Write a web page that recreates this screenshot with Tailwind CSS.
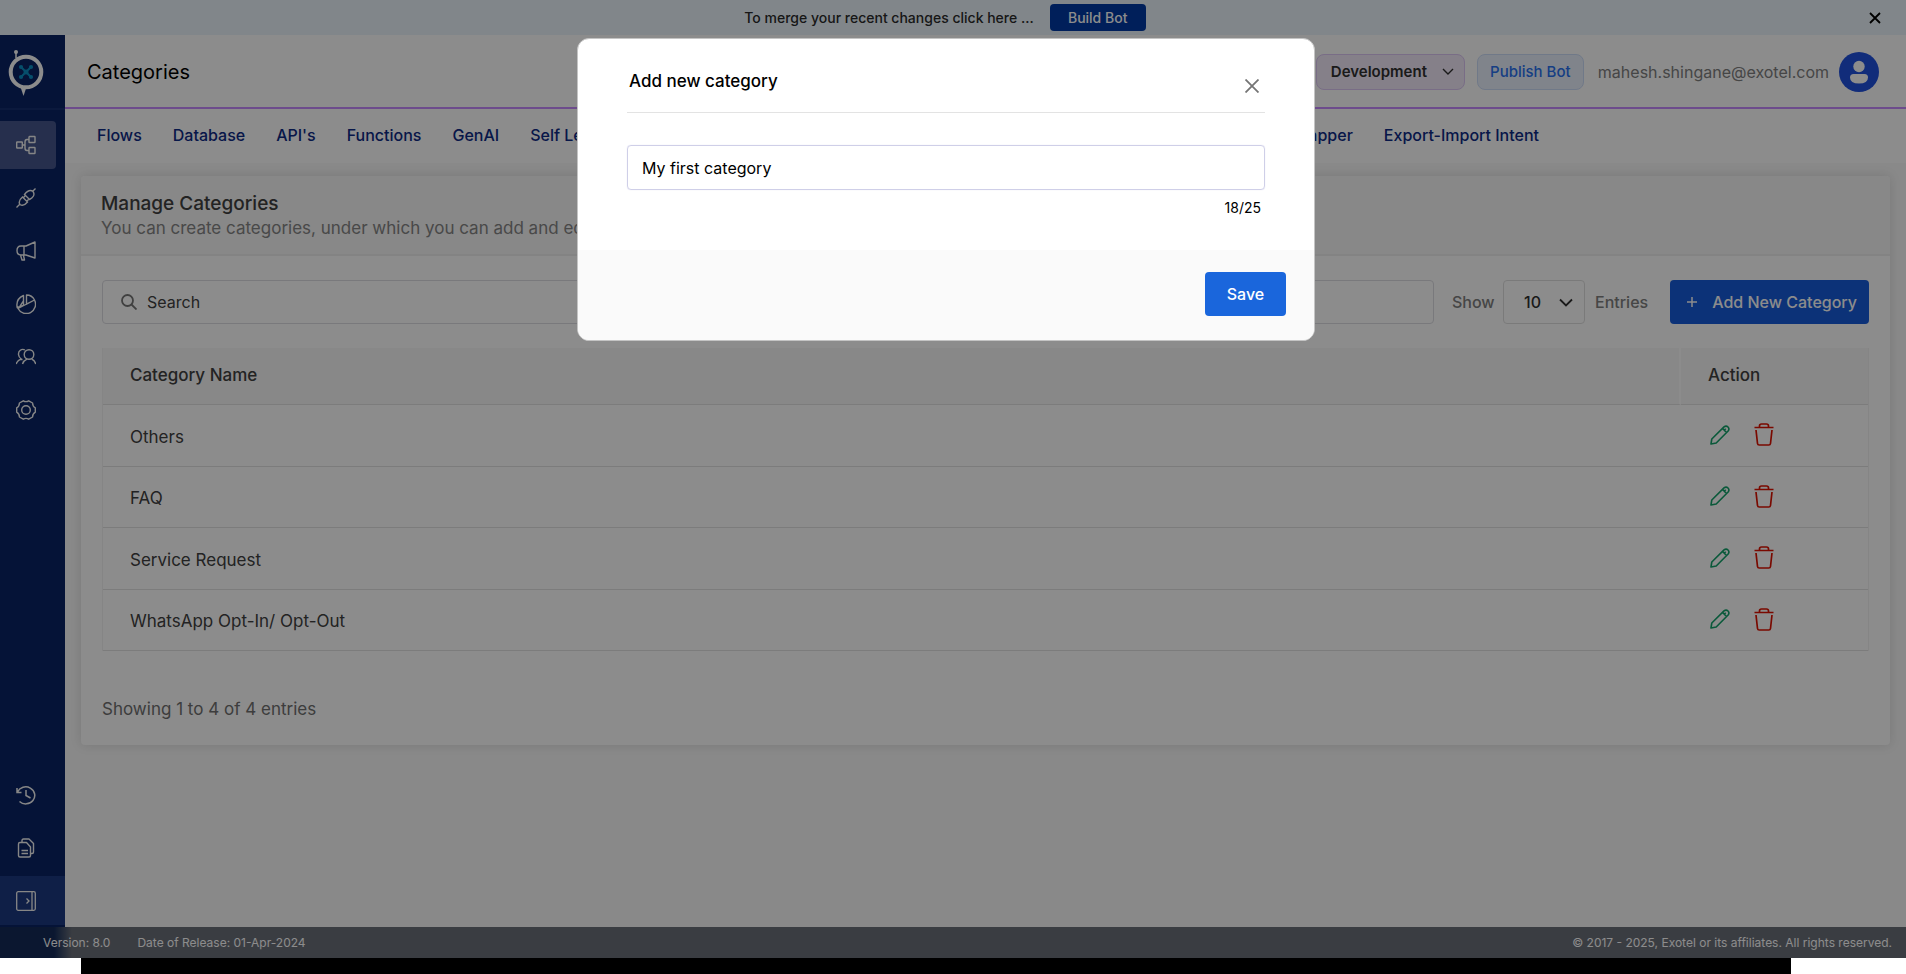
<!DOCTYPE html>
<html lang="en">
<head>
<meta charset="utf-8">
<meta name="viewport" content="width=device-width, initial-scale=1">
<title>Categories</title>
<script src="https://cdn.jsdelivr.net/npm/@tailwindcss/browser@4"></script>
</head>
<body class="flex min-h-screen flex-col bg-white font-['Inter',sans-serif] text-base text-[#404040]">
<svg class="hidden" aria-hidden="true">
  <symbol id="pencil" viewBox="0 0 20 20" fill="none" stroke="currentColor" stroke-width="1.600" stroke-linejoin="round"><path d="M1 19l.8-5L14 1.900q2.200-1.700 4 .1t.1 4L6.200 18zM12.600 3.500l3.900 4M14.200 5.200l1.500-1.500"/></symbol>
  <symbol id="trash" viewBox="0 0 20 23" fill="none" stroke="currentColor" stroke-width="1.700" stroke-linejoin="round"><path d="M.5 4.500h19M5.500 4.500V3q0-2 2-2h5q2 0 2 2v1.500M2 7l1.500 13.500q.2 1.500 1.700 1.500h9.600q1.500 0 1.700-1.500L18 7"/></symbol>
</svg>

<div class="relative flex flex-1 flex-col">
  <div class="grid h-[35px] grid-cols-[1fr_auto_1fr] items-center bg-[#ebf5fb] px-6">
    <span></span>
    <div class="flex items-center gap-4 pr-4">
      <p class="text-sm font-medium text-[#2b2b2b]">To merge your recent changes click here ...</p>
      <button type="button" class="h-[27px] w-24 rounded bg-[#003aa5] text-sm font-medium text-white">Build Bot</button>
    </div>
    <button type="button" aria-label="Dismiss" class="justify-self-end text-black"><svg class="size-3.5" viewBox="0 0 14 14" fill="none" stroke="currentColor" stroke-width="1.800"><path d="M2 2l10 10M12 2L2 12"/></svg></button>
  </div>

  <div class="flex flex-1">
    <aside class="flex w-[65px] shrink-0 flex-col bg-[#0a2465]">
      <a href="#" aria-label="Home" class="flex h-[75px] items-center border-b-2 border-[#142f70] pt-1 pl-1.5">
        <svg class="h-[54px] w-10" viewBox="0 0 40 54"><path d="M10 11V5" stroke="#fff" stroke-width="1.500"/><circle cx="10" cy="5" r="2" fill="#fff"/><circle cx="20" cy="25" r="15.300" fill="none" stroke="#fff" stroke-width="4"/><path d="M14.500 40L17.500 49l3-9z" fill="#fff"/><path d="M15 20l10 10M25 20l-10 10" stroke="#0b8fc4" stroke-width="2"/><g fill="#0b8fc4"><circle cx="15" cy="20" r="2.100"/><circle cx="25" cy="20" r="2.100"/><circle cx="15" cy="30" r="2.100"/><circle cx="25" cy="30" r="2.100"/><circle cx="20" cy="25" r="2.500"/></g></svg>
      </a>
      <nav aria-label="Main" class="flex flex-1 flex-col pt-[11px] text-[#f5f5f5] [&_svg]:size-5 [&_svg]:fill-none [&_svg]:stroke-current">
        <a href="#" aria-label="Flows" class="mb-[5px] flex h-12 w-14 items-center rounded-r-sm bg-[#45578c] pl-4"><svg viewBox="0 0 20 20" stroke-width="1.400"><rect x=".7" y="7" width="5.600" height="6" rx=".5"/><rect x="13" y="1.500" width="6" height="6" rx=".5"/><rect x="13" y="12.500" width="6" height="6" rx=".5"/><path d="M6.300 10H9M13 4.500h-2Q9 4.500 9 7v6q0 2.500 2 2.500h2"/></svg></a>
        <a href="#" aria-label="Integrations" class="mb-[5px] flex h-12 items-center pl-4"><svg viewBox="0 0 20 20" stroke-width="1.400"><path d="M.5 19.500l3-3M4 16.500c-2-3-.5-5 2.500-7.500l5 5c-2.500 3-4.500 4.500-7.500 2.500zM8.500 6.500l5 5c3-1.500 6-4.500 3.500-8-3.500-2.500-6.500.5-8.500 3zM16.500 3.500l3-3M7 10l2-2M10.500 13.500l2-2"/></svg></a>
        <a href="#" aria-label="Campaigns" class="mb-[5px] flex h-12 items-center pl-4"><svg viewBox="0 0 20 20" stroke-width="1.400" stroke-linejoin="round"><path d="M19 1v16l-9-3H5q-4 0-4-4.500T5 5h5zM8 5v9M4.500 14l1.500 5h2.500l-1-4.500"/></svg></a>
        <a href="#" aria-label="Analytics" class="mb-[5px] flex h-12 items-center pl-4"><svg viewBox="0 0 20 20" stroke-width="1.400" stroke-linejoin="round"><path d="M10.500 1q5.500 0 8 5l-8 4.200zM18.500 6a9 9 0 1 1-16.500 8.500zM7.500 1.500v10L1.200 13.500Q-.5 5 7.500 1.500zM3.500 12.800l4-6"/></svg></a>
        <a href="#" aria-label="Users" class="mb-[5px] flex h-12 items-center pl-4"><svg viewBox="0 0 20 20" stroke-width="1.400"><circle cx="13" cy="7.500" r="4.800"/><path d="M6.500 17q1.200-3.500 4.500-4.800M19.800 17q-1-3.500-4-4.800M9 3C5.500 1.200 2.200 4 2.500 7.500q.3 3 2.800 4.500Q1.200 13.500.2 17M4.500 12.500h2"/></svg></a>
        <a href="#" aria-label="Settings" class="flex h-12 items-center pl-4"><svg viewBox="0 0 20 20" stroke-width="1.400" stroke-linejoin="round"><circle cx="10" cy="10" r="4.300"/><path d="M19.300 7.800v4.400Q16.500 13.800 16.600 17L12.700 19.200Q10 17.600 7.300 19.200L3.400 17Q3.500 13.800.7 12.200V7.800Q3.500 6.200 3.400 3L7.300.8Q10 2.400 12.700.8L16.600 3Q16.500 6.200 19.300 7.800z"/></svg></a>
        <a href="#" aria-label="History" class="mt-auto mb-[5px] flex h-12 items-center pl-4"><svg viewBox="0 0 20 20" stroke-width="1.500"><path d="M1 3v4.500h4.500M1.500 7a9 8.500 0 1 1 2 9.500M10 5v5.500l4.500 2.500"/></svg></a>
        <a href="#" aria-label="Documents" class="mb-1 flex h-12 items-center pl-4"><svg viewBox="0 0 20 20" stroke-width="1.400" stroke-linejoin="round"><path d="M4 4.500h6.500l4 4.500v8.500q0 1.500-1.500 1.500H4q-1.500 0-1.500-1.500V6q0-1.500 1.500-1.500zM6 4V2.500Q6 1 7.500 1H13l4.500 4.500V14q0 1.500-1.500 1.500h-1M5.500 12.500H12M5.500 15.500H12"/></svg></a>
        <a href="#" aria-label="Expand sidebar" class="mb-0.5 flex h-[49px] items-center bg-[#1d3a81] pl-4"><svg viewBox="0 0 20 20" stroke-width="1.300"><rect x=".7" y=".7" width="18.600" height="18.600" rx="1.500"/><path d="M16 .7v18.600M10.500 7.500L13 10l-2.500 2.500"/></svg></a>
      </nav>
    </aside>

    <div class="flex min-w-0 flex-1 flex-col bg-[#f9f9f9]">
      <header class="flex h-[74px] items-center border-b-2 border-[#c68aff] bg-white pt-0.5 pr-[27px] pl-[22px]">
        <h1 class="flex-1 text-xl text-black">Categories</h1>
        <button type="button" class="mr-3 flex h-9 w-[149px] items-center justify-between rounded-lg border border-[#dcc6f4] bg-[#f2eafa] pr-2.5 pl-3.5 text-[15px] font-semibold text-[#303030]">Development<svg class="h-2 w-3" viewBox="0 0 12 8" fill="none" stroke="currentColor" stroke-width="1.400"><path d="M1 1l5 5 5-5"/></svg></button>
        <button type="button" class="mr-3.5 h-9 w-[107px] rounded-lg border border-[#cddcf8] bg-[#eaf1fd] text-[15px] font-medium text-[#2871f0]">Publish Bot</button>
        <span class="mr-2.5 text-[#808080]">mahesh.shingane@exotel.com</span>
        <a href="#" aria-label="Account"><svg class="size-10" viewBox="0 0 40 40"><circle cx="20" cy="20" r="20" fill="#1f50de"/><circle cx="20" cy="14.500" r="5.700" fill="#fff"/><path d="M11 25.500q0-3.500 3.500-3.500h11q3.500 0 3.500 3.500 0 6-9 6t-9-6z" fill="#fff"/></svg></a>
      </header>

      <nav aria-label="Bot sections" class="flex h-[54px] justify-between bg-white pt-3.5 pr-[367px] pl-8 font-medium text-[#0e2a85]">
        <div class="flex gap-[31px]"><a href="#">Flows</a><a href="#">Database</a><a href="#">API's</a><a href="#">Functions</a><a href="#">GenAI</a><a href="#">Self Learning</a></div>
        <div class="flex gap-[31px]"><a href="#">Mapper</a><a href="#">Export-Import Intent</a></div>
      </nav>

      <main class="pt-[13px] pr-4 pl-4">
        <section class="rounded bg-white shadow-[0_0_12px_rgba(0,0,0,0.12)]">
          <div class="h-20 rounded-t border-b-2 border-[#efefef] bg-[#f7f7f7] px-5 pt-4">
            <h2 class="text-[19px] leading-6 font-medium">Manage Categories</h2>
            <p class="text-[17px] leading-6 text-[#858585]">You can create categories, under which you can add and edit</p>
          </div>
          <div class="px-[21px] pt-6 pb-6">
            <div class="flex h-11 items-center">
              <label class="flex h-full flex-1 items-center gap-2.5 rounded border border-[#dcdce2] px-[18px]">
                <svg class="size-4 text-[#757575]" viewBox="0 0 16 16" fill="none" stroke="currentColor" stroke-width="1.800"><circle cx="6.500" cy="6.500" r="5.500"/><path d="M10.500 10.500l5 5"/></svg>
                <input type="search" aria-label="Search" placeholder="Search" class="min-w-0 flex-1 bg-transparent outline-none placeholder:text-[#404040]">
              </label>
              <label for="entries" class="ml-[18px] w-[51px] font-medium text-[#808080]">Show</label>
              <div class="relative h-full w-[82px]">
                <select id="entries" class="size-full appearance-none rounded border border-[#dedede] bg-white pl-5 font-medium text-[#303030]"><option>10</option><option>25</option></select>
                <svg class="pointer-events-none absolute top-[18px] right-3 h-2.5 w-3.5 text-[#303030]" viewBox="0 0 14 10" fill="none" stroke="currentColor" stroke-width="1.800"><path d="M1 1.500l6 6 6-6"/></svg>
              </div>
              <span class="ml-2.5 w-[75px] font-medium text-[#808080]">Entries</span>
              <button type="button" class="flex h-full w-[199px] items-center justify-between rounded bg-[#165bda] pr-3 pl-[17px] font-medium text-white"><svg class="size-2.5" viewBox="0 0 10 10" stroke="currentColor" stroke-width="1.500"><path d="M5 0v10M0 5h10"/></svg>Add New Category</button>
            </div>

            <table class="mt-6 w-full table-fixed border-separate border-spacing-0 border-x border-[#f3f3f3] text-left text-[17px]">
              <thead><tr class="h-[57px] bg-[#f7f7f7]">
                <th scope="col" class="border-r-2 border-b border-[#e2e2e2] border-r-white px-[27px] font-medium">Category Name</th>
                <th scope="col" class="w-[187px] border-b border-[#e2e2e2] px-[27px] font-medium">Action</th>
              </tr></thead>
              <tbody class="[&_td]:h-[61px] [&_td]:border-b [&_td]:border-[#e2e2e2] [&_td]:px-[27px] [&_td]:pt-1 [&_svg]:w-5 [&_tr:nth-child(odd)_td]:h-[62px]">
                <tr><td>Others</td><td><div class="flex items-center gap-6 pb-1.5 pl-0.5"><button type="button" aria-label="Edit Others" class="text-[#13a36b]"><svg class="h-5"><use href="#pencil"/></svg></button><button type="button" aria-label="Delete Others" class="text-[#de1200]"><svg class="h-[23px]"><use href="#trash"/></svg></button></div></td></tr>
                <tr><td>FAQ</td><td><div class="flex items-center gap-6 pb-1.5 pl-0.5"><button type="button" aria-label="Edit FAQ" class="text-[#13a36b]"><svg class="h-5"><use href="#pencil"/></svg></button><button type="button" aria-label="Delete FAQ" class="text-[#de1200]"><svg class="h-[23px]"><use href="#trash"/></svg></button></div></td></tr>
                <tr><td>Service Request</td><td><div class="flex items-center gap-6 pb-1.5 pl-0.5"><button type="button" aria-label="Edit Service Request" class="text-[#13a36b]"><svg class="h-5"><use href="#pencil"/></svg></button><button type="button" aria-label="Delete Service Request" class="text-[#de1200]"><svg class="h-[23px]"><use href="#trash"/></svg></button></div></td></tr>
                <tr><td>WhatsApp Opt-In/ Opt-Out</td><td><div class="flex items-center gap-6 pb-1.5 pl-0.5"><button type="button" aria-label="Edit WhatsApp Opt-In/ Opt-Out" class="text-[#13a36b]"><svg class="h-5"><use href="#pencil"/></svg></button><button type="button" aria-label="Delete WhatsApp Opt-In/ Opt-Out" class="text-[#de1200]"><svg class="h-[23px]"><use href="#trash"/></svg></button></div></td></tr>
              </tbody>
            </table>
            <p class="mt-[46px] text-[17px] leading-6 text-[#707070]">Showing 1 to 4 of 4 entries</p>
          </div>
        </section>
      </main>
    </div>
  </div>

  <footer class="flex h-[31px] items-center gap-[27px] bg-linear-to-r from-[#142b58] from-[54px] to-[#6b7079] to-[72px] pr-3.5 pl-[43px] text-xs text-white">
    <span>Version: 8.0</span>
    <span>Date of Release: 01-Apr-2024</span>
    <span class="ml-auto">© 2017 - 2025, Exotel or its affiliates. All rights reserved.</span>
  </footer>

  <div class="absolute inset-0 z-10 flex items-start justify-center bg-black/45 pt-[38px] pr-3.5">
    <div role="dialog" aria-modal="true" aria-labelledby="dialog-title" class="w-[738px] overflow-hidden rounded-xl border border-[#c4c4c4] bg-white text-black">
      <div class="px-[49px] pb-8">
        <div class="flex h-[74px] items-center justify-between border-b border-[#e3e3e3] pt-4 pr-1.5 pl-0.5">
          <h2 id="dialog-title" class="pb-1 text-[17px] font-medium">Add new category</h2>
          <button type="button" aria-label="Close" class="pt-1 text-[#757575]"><svg class="size-3.5" viewBox="0 0 14 14" fill="none" stroke="currentColor" stroke-width="1.800"><path d="M.5.5l13 13M13.500.5l-13 13"/></svg></button>
        </div>
        <input type="text" aria-label="Category name" value="My first category" class="mt-8 h-[45px] w-full rounded border border-[#cfcfe8] px-3.5 text-base shadow-[0_0_1px_#cfcfe8] outline-none">
        <p class="mt-2 pr-1 text-right text-sm">18/25</p>
      </div>
      <div class="flex h-[90px] justify-end bg-[#fafafa] pt-[22px] pr-7">
        <button type="button" class="h-11 w-[81px] rounded bg-[#1a66dc] font-medium text-white">Save</button>
      </div>
    </div>
  </div>
</div>
<div class="mr-[115px] ml-[81px] h-4 bg-black"></div>
</body>
</html>
